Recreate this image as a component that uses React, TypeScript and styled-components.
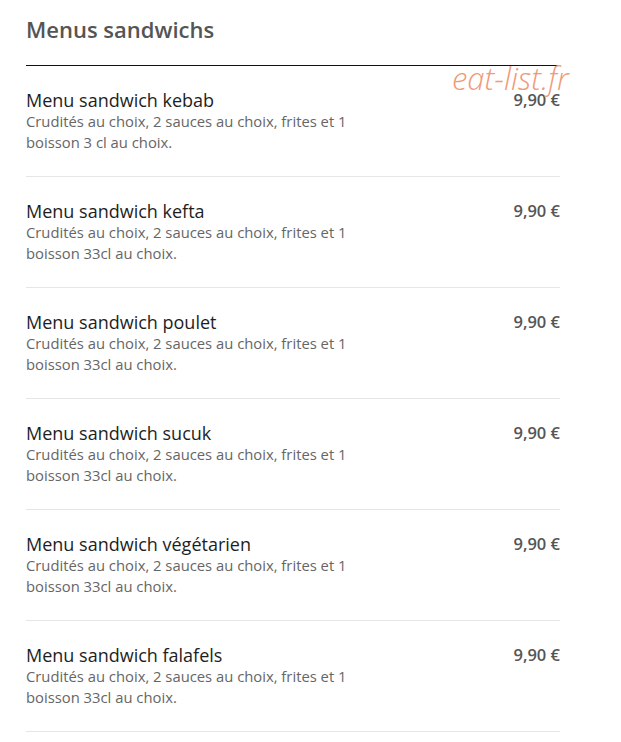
import React from "react";
import styled, { createGlobalStyle } from "styled-components";

const GlobalStyle = createGlobalStyle`
  body {
    margin: 0;
    background: #fff;
    font-family: "Open Sans", "Noto Sans", sans-serif;
  }
`;

const Page = styled.div`
  position: relative;
  width: 534px;
  padding: 14px 0 0 26px;
`;

const Heading = styled.h2`
  margin: 0;
  font-size: 22px;
  line-height: 30px;
  font-weight: 600;
  color: #555;
  padding-bottom: 21px;
  border-bottom: 1px solid #111;
`;

const Watermark = styled.span`
  position: absolute;
  top: 58px;
  left: 452px;
  font-size: 31px;
  font-style: italic;
  font-weight: 300;
  line-height: 40px;
  white-space: nowrap;
  color: #f09a78;
  pointer-events: none;
`;

const Item = styled.div`
  display: flex;
  justify-content: space-between;
  align-items: flex-start;
  padding: 23px 0 23px;
  border-bottom: 1px solid #e6e6e6;
`;

const Info = styled.div`
  max-width: 340px;
`;

const Name = styled.div`
  font-size: 18px;
  line-height: 22px;
  font-weight: 500;
  color: #1e1e1e;
`;

const Desc = styled.div`
  font-size: 14.8px;
  line-height: 21px;
  color: #666;
`;

const Price = styled.div`
  font-size: 16.5px;
  line-height: 22px;
  font-weight: 600;
  color: #555;
  white-space: nowrap;
`;

const items = [
  { name: "Menu sandwich kebab", desc: "Crudités au choix, 2 sauces au choix, frites et 1 boisson 3 cl au choix." },
  { name: "Menu sandwich kefta", desc: "Crudités au choix, 2 sauces au choix, frites et 1 boisson 33cl au choix." },
  { name: "Menu sandwich poulet", desc: "Crudités au choix, 2 sauces au choix, frites et 1 boisson 33cl au choix." },
  { name: "Menu sandwich sucuk", desc: "Crudités au choix, 2 sauces au choix, frites et 1 boisson 33cl au choix." },
  { name: "Menu sandwich végétarien", desc: "Crudités au choix, 2 sauces au choix, frites et 1 boisson 33cl au choix." },
  { name: "Menu sandwich falafels", desc: "Crudités au choix, 2 sauces au choix, frites et 1 boisson 33cl au choix." },
];

export default function App() {
  return (
    <>
      <GlobalStyle />
      <Page>
        <Heading>Menus sandwichs</Heading>
        {items.map((it) => (
          <Item key={it.name}>
            <Info>
              <Name>{it.name}</Name>
              <Desc>{it.desc}</Desc>
            </Info>
            <Price>9,90 €</Price>
          </Item>
        ))}
        <Watermark>eat-list.fr</Watermark>
      </Page>
    </>
  );
}
